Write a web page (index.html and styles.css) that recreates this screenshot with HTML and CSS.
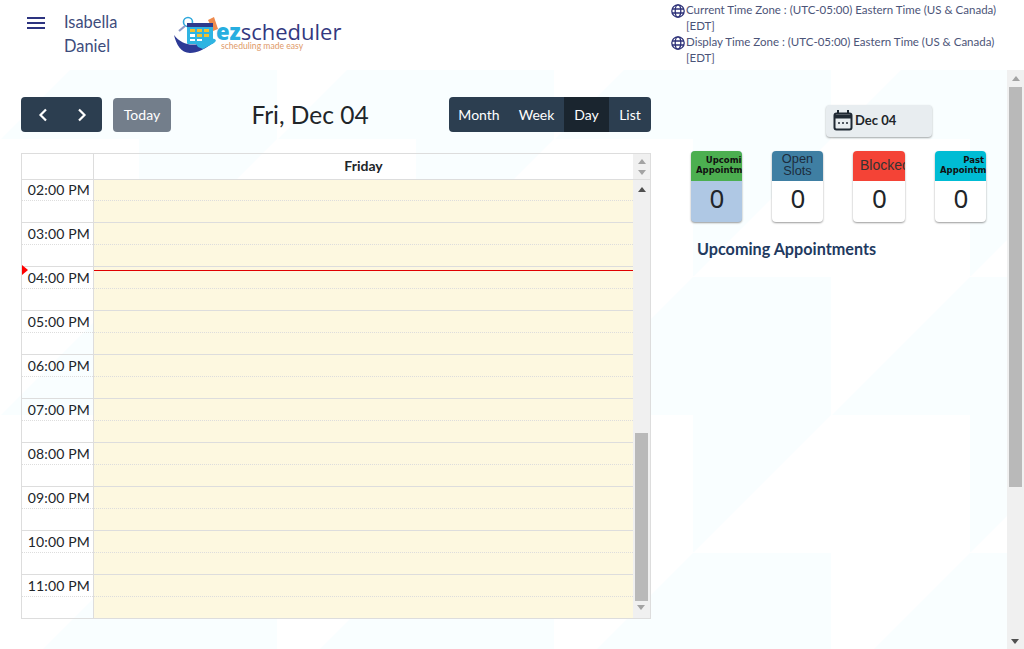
FILE: index.html
```html
<!DOCTYPE html>
<html lang="en">
<head>
<meta charset="utf-8">
<title>ezscheduler</title>
<link rel="stylesheet" href="styles.css">
</head>
<body>
<header class="topbar">
  <button class="burger" aria-label="Menu"><span></span><span></span><span></span></button>
  <div class="username">Isabella<br>Daniel</div>
  <div class="logo">
    <svg class="logo-mark" width="46" height="38" viewBox="0 0 46 38">
      <circle cx="14" cy="6" r="4.500" fill="none" stroke="#2fa8dc" stroke-width="1.600"/>
      <path d="M11 10 5 15" stroke="#8f9bc8" stroke-width="2.200"/>
      <path d="M34 4 40 1 44 13 39 15z" fill="#ee8a4d"/>
      <rect x="13" y="7" width="26" height="21" rx="1" fill="#2fb4e2"/>
      <rect x="13" y="7" width="26" height="4" fill="#2d3a8c"/>
      <path d="M16 13h5v3h-5zM23 13h5v3h-5zM30 13h5v3h-5zM23 18h5v3h-5zM30 18h5v3h-5z" fill="#f2c230"/>
      <path d="M16 18h5v3h-5zM16 23h5v2h-5zM23 23h5v2h-5z" fill="#fff"/>
      <path d="M0 19C6 27 15 30 24 28L34 25C38 24 40 27 36 29 30 33 24 37 16 37 7 37 2 28 0 19Z" fill="#2d3a96"/>
      <path d="M22 28 36 23C41 22 44 24 40 27L29 33 24 31Z" fill="#2fb4e2"/>
    </svg>
    <div class="logo-text">
      <div class="logo-name"><b>ez</b>scheduler</div>
      <div class="logo-tag">scheduling made easy</div>
    </div>
  </div>
  <div class="zones">
    <div class="zone">
      <svg class="globe" width="14" height="14" viewBox="0 0 14 14"><g fill="none" stroke="#2d3178" stroke-width="1.300"><circle cx="7" cy="7" r="6.200"/><ellipse cx="7" cy="7" rx="2.800" ry="6.200"/><path d="M1 5h12M1 9h12"/></g></svg>
      <span>Current Time Zone : (UTC-05:00) Eastern Time (US &amp; Canada) [EDT]</span>
    </div>
    <div class="zone">
      <svg class="globe" width="14" height="14" viewBox="0 0 14 14"><g fill="none" stroke="#2d3178" stroke-width="1.300"><circle cx="7" cy="7" r="6.200"/><ellipse cx="7" cy="7" rx="2.800" ry="6.200"/><path d="M1 5h12M1 9h12"/></g></svg>
      <span>Display Time Zone : (UTC-05:00) Eastern Time (US &amp; Canada) [EDT]</span>
    </div>
  </div>
</header>
<div class="viewport">
  <svg class="pattern" width="1007" height="579">
    <defs>
      <pattern id="tile" width="277" height="276" patternUnits="userSpaceOnUse" patternTransform="translate(0 -70)">
        <path d="M139 1H277V139L139 277V139H1Z" fill="#f9feff"/>
      </pattern>
    </defs>
    <rect width="1007" height="579" fill="url(#tile)"/>
  </svg>
  <main class="content">
    <section class="left">
      <div class="toolbar">
        <div class="tool-start">
          <div class="pager">
            <button class="pager-btn" aria-label="Previous"><svg width="10" height="14" viewBox="0 0 10 14"><path d="M8 1.500 2.500 7 8 12.500" fill="none" stroke="#fff" stroke-width="2.200"/></svg></button>
            <button class="pager-btn" aria-label="Next"><svg width="10" height="14" viewBox="0 0 10 14"><path d="M2 1.500 7.500 7 2 12.500" fill="none" stroke="#fff" stroke-width="2.200"/></svg></button>
          </div>
          <button class="today">Today</button>
        </div>
        <h1 class="cal-title">Fri, Dec 04</h1>
        <div class="views">
          <button class="view">Month</button>
          <button class="view">Week</button>
          <button class="view active">Day</button>
          <button class="view">List</button>
        </div>
      </div>
      <div class="calendar">
        <div class="cal-head">
          <div class="axis-head"></div>
          <div class="day-head">Friday</div>
          <div class="head-scroll"><i class="arrow up light"></i><i class="arrow down light"></i></div>
        </div>
        <div class="cal-body">
          <div class="grid">
            <div class="hour"><div class="time">02:00 PM</div><div class="slots"><div class="slot"></div><div class="slot"></div></div></div>
            <div class="hour"><div class="time">03:00 PM</div><div class="slots"><div class="slot"></div><div class="slot"></div></div></div>
            <div class="hour"><div class="time">04:00 PM</div><div class="slots"><div class="slot"></div><div class="slot"></div></div></div>
            <div class="hour"><div class="time">05:00 PM</div><div class="slots"><div class="slot"></div><div class="slot"></div></div></div>
            <div class="hour"><div class="time">06:00 PM</div><div class="slots"><div class="slot"></div><div class="slot"></div></div></div>
            <div class="hour"><div class="time">07:00 PM</div><div class="slots"><div class="slot"></div><div class="slot"></div></div></div>
            <div class="hour"><div class="time">08:00 PM</div><div class="slots"><div class="slot"></div><div class="slot"></div></div></div>
            <div class="hour"><div class="time">09:00 PM</div><div class="slots"><div class="slot"></div><div class="slot"></div></div></div>
            <div class="hour"><div class="time">10:00 PM</div><div class="slots"><div class="slot"></div><div class="slot"></div></div></div>
            <div class="hour"><div class="time">11:00 PM</div><div class="slots"><div class="slot"></div><div class="slot"></div></div></div>
          </div>
          <div class="body-scroll">
            <i class="arrow up dark"></i>
            <div class="cal-thumb"></div>
            <i class="arrow down light"></i>
          </div>
          <div class="now-arrow"></div>
          <div class="now-line"></div>
        </div>
      </div>
    </section>
    <aside class="right">
      <div class="date-row">
        <button class="date-btn">
          <svg width="20" height="21" viewBox="0 0 20 21"><path d="M5 0v4M15 0v4" stroke="#1f2933" stroke-width="2"/><rect x="1.500" y="3.500" width="17" height="16" rx="2" fill="none" stroke="#1f2933" stroke-width="2"/><path d="M2 6.500h16" stroke="#1f2933" stroke-width="4"/><path d="M5 13h2M9 13h2M13 13h2" stroke="#1f2933" stroke-width="1.600"/></svg>
          <span>Dec 04</span>
        </button>
      </div>
      <div class="stats">
        <div class="stat selected"><div class="stat-label green tiny"><span class="tiny-text">Upcoming<br>Appointments</span></div><div class="stat-value">0</div></div>
        <div class="stat"><div class="stat-label blue">Open<br>Slots</div><div class="stat-value">0</div></div>
        <div class="stat wide"><div class="stat-label red">Blocked</div><div class="stat-value">0</div></div>
        <div class="stat"><div class="stat-label cyan tiny"><span class="tiny-text">Past<br>Appointments</span></div><div class="stat-value">0</div></div>
      </div>
      <h2 class="upcoming">Upcoming Appointments</h2>
    </aside>
  </main>
  <div class="page-scroll">
    <i class="arrow up mid"></i>
    <div class="page-thumb"></div>
    <i class="arrow down dark page-down"></i>
  </div>
</div>
</body>
</html>
```
FILE: styles.css
```css
* { box-sizing: border-box; }
html, body { margin: 0; height: 100%; overflow: hidden; }
body { background: #fff; color: #212529; font-family: "Lato", "Open Sans", sans-serif; width: 1024px; height: 649px; }
button { font: inherit; border: 0; padding: 0; }

.topbar { height: 70px; position: relative; display: flex; align-items: flex-start; }
.burger { width: 18px; margin: 17px 0 0 27px; background: none; display: flex; flex-direction: column; gap: 3px; }
.burger span { display: block; height: 2px; background: #2d3480; }
.username { width: 100px; margin: 10px 0 0 19px; font-size: 16.400px; line-height: 24px; color: #3d4c7c; }
.logo { display: flex; margin: 16px 0 0 10px; width: 170px; height: 40px; position: relative; }
.logo-mark { flex: none; }
.logo-text { margin: 4px 0 0 -4px; }
.logo-name { font-size: 22px; line-height: 22px; color: #33387f; font-family: "Open Sans", sans-serif; }
.logo-name b { color: #27aee0; font-weight: 800; }
.logo-tag { font-size: 8.600px; line-height: 8px; color: #e09a68; margin-left: 5px; }
.zones { margin: 2px 0 0 327px; width: 335px; font-size: 11.500px; color: #4c5478; line-height: 16px; }
.zone { display: flex; }
.zone span { width: 318px; }
.globe { flex: none; margin: 2px 1px 0 0; }

.viewport { height: 579px; position: relative; display: flex; }
.pattern { position: absolute; left: 0; top: 0; }
.content { width: 1007px; position: relative; display: flex; align-items: flex-start; }

.left { width: 630px; margin-left: 21px; flex: none; }
.toolbar { height: 35px; margin-top: 27px; display: flex; justify-content: space-between; align-items: center; }
.tool-start { display: flex; align-items: center; gap: 11px; width: 150px; }
.pager { display: flex; background: #2c3e50; border-radius: 4px; height: 35px; width: 81px; flex: none; }
.pager-btn { flex: 1; background: none; display: flex; align-items: center; justify-content: center; }
.pager-btn:first-child { padding-left: 2px; }
.today { width: 58px; height: 34px; background: #737e8b; color: #fff; border-radius: 4px; font-size: 14px; flex: none; }
.cal-title { margin: 0; font-size: 24.500px; line-height: 33px; font-weight: 400; color: #212529; }
.views { display: flex; height: 35px; width: 202px; background: #2c3e50; border-radius: 4px; overflow: hidden; color: #fff; }
.view { background: none; color: #fff; font-size: 14px; height: 35px; }
.view:nth-child(1) { width: 60px; }
.view:nth-child(2) { width: 55px; }
.view:nth-child(3) { width: 45px; }
.view:nth-child(4) { width: 42px; }
.view.active { background: #1a252f; }

.calendar { margin-top: 21px; height: 466px; width: 630px; border: 1px solid #ddd; position: relative; font-size: 14px; }
.cal-head { height: 26px; display: flex; border-bottom: 1px solid #ddd; }
.axis-head { width: 72px; border-right: 1px solid #ddd; flex: none; }
.day-head { flex: 1; text-align: center; font-weight: 700; font-size: 14px; line-height: 24px; color: #212529; }
.head-scroll { width: 17px; flex: none; background: #f0f0f0; display: flex; flex-direction: column; align-items: center; gap: 6px; padding-top: 5px; }
.cal-body { display: flex; height: 438px; position: relative; overflow: hidden; }
.grid { flex: 1; min-width: 0; }
.hour { height: 44px; display: flex; border-bottom: 1px solid #ddd; }
.hour:first-child { height: 43px; }
.hour:last-child { border-bottom: 0; }
.time { width: 72px; flex: none; border-right: 1px solid #ddd; text-align: right; padding-right: 3px; font-size: 14px; line-height: 21px; color: #212529; letter-spacing: .15px; position: relative; }
.hour:first-child .time { line-height: 19px; }
.time::after { content: ""; position: absolute; left: 0; right: 0; top: 21px; border-top: 1px dotted #ddd; }
.hour:first-child .time::after { top: 20px; }
.slots { flex: 1; background: #fdf8e0; }
.slot { height: 22px; }
.slot:first-child { border-bottom: 1px dotted #ddd; }
.hour:first-child .slot:first-child { height: 21px; }
.body-scroll { width: 17px; flex: none; background: #f0f0f0; display: flex; flex-direction: column; align-items: center; position: relative; padding-top: 7px; }
.cal-thumb { position: absolute; left: 2px; width: 13px; top: 253px; height: 168px; background: #b9b9b9; }
.body-scroll .arrow.down { position: absolute; top: 425px; left: 4px; }
.now-arrow { position: absolute; left: 0; top: 85px; width: 0; height: 0; border-left: 6px solid #f00; border-top: 5px solid transparent; border-bottom: 5px solid transparent; }
.now-line { position: absolute; left: 72px; right: 17px; top: 90px; border-top: 1px solid #e00000; }

.arrow { display: block; width: 0; height: 0; border-left: 4.500px solid transparent; border-right: 4.500px solid transparent; flex: none; }
.arrow.up { border-bottom: 5px solid #505050; }
.arrow.down { border-top: 5px solid #505050; }
.arrow.up.light, .arrow.up.mid { border-bottom-color: #a3a3a3; }
.arrow.down.light { border-top-color: #a3a3a3; }

.right { flex: none; width: 335px; margin-left: 21px; }
.date-row { margin: 35px 0 0 154px; }
.date-btn { width: 106px; height: 32px; background: #e8edf0; border-radius: 4px; box-shadow: 0 1px 2px rgba(0,0,0,.35); display: flex; align-items: center; gap: 2px; padding: 0 0 2px 7px; font-size: 13px; font-weight: 700; color: #212529; }
.stats { display: flex; gap: 30px; margin: 14px 0 0 19px; }
.stat { width: 51px; height: 71px; border-radius: 4px; background: #fff; box-shadow: 0 1px 2px rgba(0,0,0,.4); overflow: hidden; flex: none; }
.stat.wide { width: 52px; }
.stat.selected { background: #afc8e4; }
.stat-label { height: 30px; font-family: "Liberation Sans", sans-serif; font-size: 12.800px; line-height: 12px; text-align: center; color: #222; white-space: nowrap; padding-top: 2px; overflow: hidden; }
.tiny { font-family: "DejaVu Sans", sans-serif; font-size: 8.500px; font-weight: 700; line-height: 10px; padding: 4px 0 0 5px; color: #111; text-align: left; }
.tiny-text { display: inline-block; text-align: center; }
.green { background: #4caf50; }
.blue { background: #3f7fa3; color: #1c2c3c; }
.red { background: #f44336; font-size: 14px; line-height: 29px; padding: 0 0 0 7px; text-align: left; color: #333; }
.cyan { background: #00bcd4; }
.stat-value { height: 41px; padding-left: 1px; text-align: center; font-family: "Noto Sans", sans-serif; font-size: 26px; line-height: 35px; color: #212529; }
.upcoming { margin: 17px 0 0 25px; font-size: 16.200px; line-height: 20px; font-weight: 700; color: #1f3a5f; }

.page-scroll { width: 17px; flex: none; height: 579px; background: #f0f0f0; position: relative; display: flex; flex-direction: column; align-items: center; padding-top: 6px; }
.page-thumb { position: absolute; left: 2px; top: 17px; width: 13px; height: 400px; background: #b9b9b9; }
.page-down { position: absolute; left: 4px; bottom: 5px; }
```
